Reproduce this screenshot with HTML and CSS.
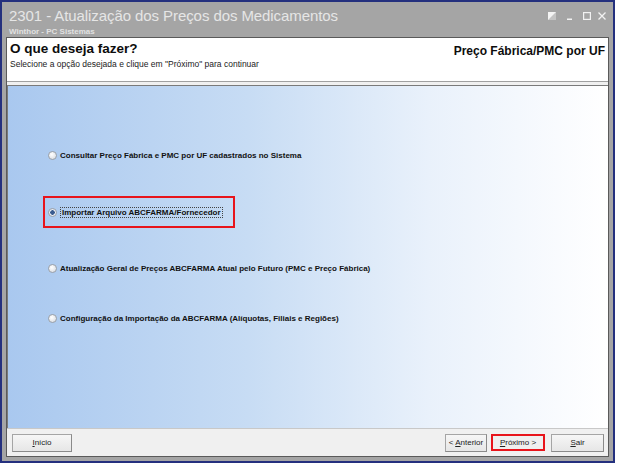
FILE: index.html
```html
<!DOCTYPE html>
<html lang="pt">
<head>
<meta charset="utf-8">
<title>2301 - Atualização dos Preços dos Medicamentos</title>
<link rel="stylesheet" href="styles.css">
</head>
<body>
<div class="window">
  <div class="titlebar">
    <div class="titles">
      <div class="title">2301 - Atualização dos Preços dos Medicamentos</div>
      <div class="subtitle">Winthor - PC Sistemas</div>
    </div>
    <div class="controls">
      <svg class="ic-restore" width="8" height="8" viewBox="0 0 8 8"><rect x="0" y="0" width="8" height="8" fill="#f4f4f4"/><path d="M8 0 L8 8 L0 8 Z" fill="#c4c4c4"/></svg>
      <svg class="ic-min" width="5" height="8" viewBox="0 0 5 8"><rect x="0" y="6.5" width="5" height="1.5" fill="#f2f2f2"/></svg>
      <svg class="ic-max" width="8" height="8" viewBox="0 0 8 8"><rect x="0.6" y="0.6" width="6.8" height="6.8" fill="none" stroke="#f2f2f2" stroke-width="1.2"/></svg>
      <svg class="ic-close" width="8" height="8" viewBox="0 0 8 8"><path d="M0.5 0.5 L7.5 7.5 M7.5 0.5 L0.5 7.5" stroke="#f2f2f2" stroke-width="1.3"/></svg>
    </div>
  </div>
  <div class="client">
    <div class="header">
      <div class="head-left">
        <div class="question">O que deseja fazer?</div>
        <div class="hint">Selecione a opção desejada e clique em "Próximo" para continuar</div>
      </div>
      <div class="head-right">Preço Fábrica/PMC por UF</div>
    </div>
    <div class="body">
      <div class="options">
        <label class="opt opt1"><span class="radio"></span><span class="label">Consultar Preço Fábrica e PMC por UF cadastrados no Sistema</span></label>
        <label class="opt opt2 highlight"><span class="radio checked"></span><span class="label focus">Importar Arquivo ABCFARMA/Fornecedor</span></label>
        <label class="opt opt3"><span class="radio"></span><span class="label">Atualização Geral de Preços ABCFARMA Atual pelo Futuro (PMC e Preço Fábrica)</span></label>
        <label class="opt opt4"><span class="radio"></span><span class="label">Configuração da Importação da ABCFARMA (Alíquotas, Filiais e Regiões)</span></label>
      </div>
    </div>
    <div class="footer">
      <button class="btn btn-inicio"><u>I</u>nício</button>
      <div class="spacer"></div>
      <button class="btn btn-anterior">&lt; <u>A</u>nterior</button>
      <div class="red-box"><button class="btn btn-proximo"><u>P</u>róximo &gt;</button></div>
      <button class="btn btn-sair"><u>S</u>air</button>
    </div>
  </div>
</div>
</body>
</html>
```

FILE: styles.css
```css
html, body {
  margin: 0;
  padding: 0;
  background: #ffffff;
}
body {
  width: 617px;
  height: 467px;
  overflow: hidden;
  font-family: "Liberation Sans", Arial, sans-serif;
}
.window {
  width: 615px;
  height: 463px;
  box-sizing: border-box;
  border: 2px solid #24307e;
  background: #a5a5a5;
  display: flex;
  flex-direction: column;
  padding: 0 4px 4px 4px;
}
.titlebar {
  height: 35px;
  display: flex;
  justify-content: space-between;
  align-items: flex-start;
  flex-shrink: 0;
}
.titles {
  padding: 5px 0 0 3px;
}
.title {
  font-size: 15px;
  color: #e6e6e6;
  line-height: 18px;
  letter-spacing: -0.08px;
}
.subtitle {
  font-size: 8px;
  font-weight: bold;
  color: #e2e2e2;
  line-height: 10px;
  margin-top: 2px;
}
.controls {
  display: flex;
  align-items: flex-end;
  padding: 10px 3px 0 0;
}
.ic-min { margin-left: 11px; }
.ic-max { margin-left: 11px; }
.ic-close { margin-left: 7px; }
.client {
  flex: 1;
  display: flex;
  flex-direction: column;
  border: 1px solid #5a5a5a;
  background: #f0f0f0;
}
.header {
  height: 44px;
  background: #ffffff;
  display: flex;
  justify-content: space-between;
  padding: 3px 3px 0 3px;
  box-sizing: border-box;
  border-bottom: 1px solid #a0a0a0;
  flex-shrink: 0;
}
.question {
  font-weight: bold;
  font-size: 13.5px;
  color: #0d0d0d;
  line-height: 16px;
}
.hint {
  font-size: 8.5px;
  color: #222;
  line-height: 11px;
  margin-top: 2px;
}
.head-right {
  font-weight: bold;
  font-size: 12px;
  color: #0d0d0d;
  padding-top: 3px;
}
.body {
  height: 342px;
  margin-top: 3px;
  background: linear-gradient(to right, #a9c8ef 0%, #c7dcf4 40%, #e9f1fb 70%, #ffffff 100%);
  border-top: 1px solid #7a7a7a;
  border-left: 1px solid #7a7a7a;
  flex-shrink: 0;
}
.options {
  display: flex;
  flex-direction: column;
  padding: 62px 0 0 40px;
}
.opt {
  display: flex;
  align-items: center;
  gap: 3px;
  height: 14px;
  font-weight: bold;
  font-size: 8px;
  color: #111;
  width: max-content;
}
.opt2 { margin-top: 36px; }
.opt3 { margin-top: 35px; }
.opt4 { margin-top: 36px; }
.highlight {
  outline: 2px solid #e8141b;
  outline-offset: 0;
  padding: 7px 10px 7px 3px;
  margin-left: -3px;
}
.radio {
  width: 7px;
  height: 7px;
  border-radius: 50%;
  border: 1px solid #9aa0a8;
  background: radial-gradient(circle at 40% 35%, #ffffff, #d4d8de);
  display: inline-block;
}
.radio.checked {
  background: radial-gradient(circle, #3a5b8f 0 2px, #e8ecf2 2.5px);
}
.label.focus {
  border: 1px dotted #444;
  padding: 0 1px;
}
.footer {
  flex: 1;
  display: flex;
  align-items: center;
  padding: 0 4px 0 5px;
  border-top: 1px solid #c8c8c8;
}
.spacer { flex: 1; }
.btn {
  font-family: "Liberation Sans", Arial, sans-serif;
  font-size: 8px;
  color: #222;
  background: linear-gradient(#f6f6f6, #e6e6e6);
  border: 1px solid #a5a5a5;
  border-right-color: #8a8a8a;
  border-bottom-color: #8a8a8a;
  height: 18px;
  padding: 0;
  box-sizing: border-box;
}
.btn-inicio { width: 60px; }
.btn-anterior { width: 42px; }
.red-box {
  border: 2px solid #e8141b;
  margin: 0 6px 0 4px;
  display: flex;
}
.red-box .btn {
  width: 50px;
  height: 13px;
  border: none;
  background: #efefef;
}
.btn-sair { width: 53px; }
```
